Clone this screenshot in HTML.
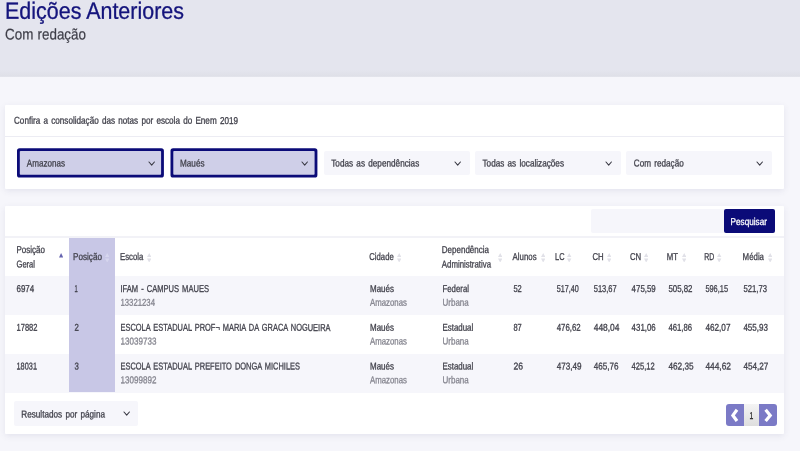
<!DOCTYPE html>
<html lang="pt-BR">
<head>
<meta charset="utf-8">
<title>Edições Anteriores</title>
<style>
*{box-sizing:border-box;margin:0;padding:0}
html,body{width:800px;height:451px;overflow:hidden}
body{background:#f6f6fb;font-family:"Liberation Sans",sans-serif;color:#41414b;position:relative;font-size:10px}
.abs{position:absolute}
.t{position:absolute;left:0;top:0;white-space:nowrap;display:block;transform-origin:0 0;-webkit-text-stroke:.3px;word-spacing:.12em}
.hdr{left:0;top:0;width:800px;height:77px;background:linear-gradient(#e4e5ee 0,#e4e5ee 70px,#dfe0e8 76px,#e6e7ee 77px)}
.card{background:#fff;box-shadow:0 2px 6px rgba(70,70,120,.10);border-radius:1px}
.sel{position:absolute;height:24px;top:151px;background:#f6f6fb;border-radius:2px}
.row{position:absolute;left:5px;width:779px;background:#f6f6fb}
</style>
</head>
<body>
<div class="abs hdr"></div>
<div class="abs card" style="left:5px;top:105px;width:779px;height:84px"></div>
<div class="abs" style="left:5px;top:136px;width:779px;height:1px;background:#ececf3"></div>
<svg class="abs" style="left:0;top:140px" width="340" height="45" viewBox="0 140 340 45">
<rect x="17" y="148.2" width="146.9" height="29.3" rx="2.6" fill="#0b0b78"/><rect x="19.8" y="151" width="141.3" height="23.7" rx=".8" fill="#cfcfe8"/>
<rect x="170.5" y="148.2" width="146.9" height="29.3" rx="2.6" fill="#0b0b78"/><rect x="173.3" y="151" width="141.3" height="23.7" rx=".8" fill="#cfcfe8"/>
</svg>
<div class="sel" style="left:323.5px;width:146px"></div>
<div class="sel" style="left:474.5px;width:146px"></div>
<div class="sel" style="left:626px;width:146px"></div>

<div class="abs card" style="left:5px;top:205.5px;width:779px;height:228.5px"></div>
<div class="abs" style="left:591px;top:209px;width:133px;height:24px;background:#f6f6fb;border-radius:2px 0 0 2px"></div>
<div class="abs" style="left:724px;top:209px;width:51px;height:24px;background:#0b0b78;border-radius:2px"></div>
<div class="abs" style="left:5px;top:236px;width:779px;height:2px;background:#f2f2f7"></div>
<div class="row" style="top:276px;height:39px"></div>
<div class="row" style="top:354px;height:39px"></div>
<div class="abs" style="left:68.6px;top:237.5px;width:46px;height:154.8px;background:#c8c7e6"></div>
<div class="abs" style="left:13.75px;top:401.25px;width:123.75px;height:24.5px;background:#f6f6fb;border-radius:2px"></div>

<div class="abs" style="left:726px;top:404px;width:18px;height:22px;background:#7b7ac6;border-radius:3px 0 0 3px"></div>
<div class="abs" style="left:744px;top:404px;width:15.2px;height:22px;background:linear-gradient(#f4f4f4,#dedede)"></div>
<div class="abs" style="left:759.2px;top:404px;width:18px;height:22px;background:#7b7ac6;border-radius:0 3px 3px 0"></div>
<svg class="abs" style="left:726px;top:404px" width="18" height="22" viewBox="0 0 18 22"><path d="M11 5.8 L6.9 11.4 L11 17" fill="none" stroke="#fff" stroke-width="3.2"/></svg>
<svg class="abs" style="left:759.2px;top:404px" width="18" height="22" viewBox="0 0 18 22"><path d="M6.6 5.8 L11.2 11.4 L6.6 17" fill="none" stroke="#fff" stroke-width="3.2"/></svg>

<svg class="abs" style="left:147.7px;top:160.8px" width="7.4" height="5.1" viewBox="-1 -1 7.4 5.1"><path d="M0 0 L2.7 3.1 L5.4 0" fill="none" stroke="#383842" stroke-width="1.05" stroke-linecap="round" stroke-linejoin="round"/></svg>
<svg class="abs" style="left:301.2px;top:160.8px" width="7.4" height="5.1" viewBox="-1 -1 7.4 5.1"><path d="M0 0 L2.7 3.1 L5.4 0" fill="none" stroke="#383842" stroke-width="1.05" stroke-linecap="round" stroke-linejoin="round"/></svg>
<svg class="abs" style="left:453.8px;top:160.8px" width="7.4" height="5.1" viewBox="-1 -1 7.4 5.1"><path d="M0 0 L2.7 3.1 L5.4 0" fill="none" stroke="#383842" stroke-width="1.05" stroke-linecap="round" stroke-linejoin="round"/></svg>
<svg class="abs" style="left:605.3px;top:160.8px" width="7.4" height="5.1" viewBox="-1 -1 7.4 5.1"><path d="M0 0 L2.7 3.1 L5.4 0" fill="none" stroke="#383842" stroke-width="1.05" stroke-linecap="round" stroke-linejoin="round"/></svg>
<svg class="abs" style="left:756px;top:160.8px" width="7.4" height="5.1" viewBox="-1 -1 7.4 5.1"><path d="M0 0 L2.7 3.1 L5.4 0" fill="none" stroke="#383842" stroke-width="1.05" stroke-linecap="round" stroke-linejoin="round"/></svg>
<svg class="abs" style="left:122.6px;top:410.9px" width="7.4" height="5.1" viewBox="-1 -1 7.4 5.1"><path d="M0 0 L2.7 3.1 L5.4 0" fill="none" stroke="#383842" stroke-width="1.05" stroke-linecap="round" stroke-linejoin="round"/></svg>
<svg class="abs" style="left:104.8px;top:252.6px" width="4.4" height="9.6" viewBox="0 0 4.4 9.6"><path d="M2.2 0 L4.4 4.1 L0 4.1 Z M0 5.5 L4.4 5.5 L2.2 9.6 Z" fill="#d6d6ee"/></svg>
<svg class="abs" style="left:146.8px;top:252.6px" width="4.4" height="9.6" viewBox="0 0 4.4 9.6"><path d="M2.2 0 L4.4 4.1 L0 4.1 Z M0 5.5 L4.4 5.5 L2.2 9.6 Z" fill="#e1e1e8"/></svg>
<svg class="abs" style="left:397px;top:252.6px" width="4.4" height="9.6" viewBox="0 0 4.4 9.6"><path d="M2.2 0 L4.4 4.1 L0 4.1 Z M0 5.5 L4.4 5.5 L2.2 9.6 Z" fill="#e1e1e8"/></svg>
<svg class="abs" style="left:497.8px;top:252.6px" width="4.4" height="9.6" viewBox="0 0 4.4 9.6"><path d="M2.2 0 L4.4 4.1 L0 4.1 Z M0 5.5 L4.4 5.5 L2.2 9.6 Z" fill="#e1e1e8"/></svg>
<svg class="abs" style="left:540.5px;top:252.6px" width="4.4" height="9.6" viewBox="0 0 4.4 9.6"><path d="M2.2 0 L4.4 4.1 L0 4.1 Z M0 5.5 L4.4 5.5 L2.2 9.6 Z" fill="#e1e1e8"/></svg>
<svg class="abs" style="left:567.3px;top:252.6px" width="4.4" height="9.6" viewBox="0 0 4.4 9.6"><path d="M2.2 0 L4.4 4.1 L0 4.1 Z M0 5.5 L4.4 5.5 L2.2 9.6 Z" fill="#e1e1e8"/></svg>
<svg class="abs" style="left:606.5px;top:252.6px" width="4.4" height="9.6" viewBox="0 0 4.4 9.6"><path d="M2.2 0 L4.4 4.1 L0 4.1 Z M0 5.5 L4.4 5.5 L2.2 9.6 Z" fill="#e1e1e8"/></svg>
<svg class="abs" style="left:644px;top:252.6px" width="4.4" height="9.6" viewBox="0 0 4.4 9.6"><path d="M2.2 0 L4.4 4.1 L0 4.1 Z M0 5.5 L4.4 5.5 L2.2 9.6 Z" fill="#e1e1e8"/></svg>
<svg class="abs" style="left:681.5px;top:252.6px" width="4.4" height="9.6" viewBox="0 0 4.4 9.6"><path d="M2.2 0 L4.4 4.1 L0 4.1 Z M0 5.5 L4.4 5.5 L2.2 9.6 Z" fill="#e1e1e8"/></svg>
<svg class="abs" style="left:717.3px;top:252.6px" width="4.4" height="9.6" viewBox="0 0 4.4 9.6"><path d="M2.2 0 L4.4 4.1 L0 4.1 Z M0 5.5 L4.4 5.5 L2.2 9.6 Z" fill="#e1e1e8"/></svg>
<svg class="abs" style="left:767.5px;top:252.6px" width="4.4" height="9.6" viewBox="0 0 4.4 9.6"><path d="M2.2 0 L4.4 4.1 L0 4.1 Z M0 5.5 L4.4 5.5 L2.2 9.6 Z" fill="#e1e1e8"/></svg>
<svg class="abs" style="left:58.8px;top:253.4px" width="4.2" height="4.4" viewBox="0 0 4.2 4.4"><path d="M2.1 0 L4.2 4.4 L0 4.4 Z" fill="#6664b0"/></svg>
<div class="abs" style="left:0;top:0;width:800px;height:451px;will-change:transform">
<span class="t" style="font-size:23.5px;line-height:29px;color:#14147c;transform:matrix(0.9135,.0005,0,1,5.00,-3.25);-webkit-text-stroke:.3px;word-spacing:0;">Edições Anteriores</span>
<span class="t" style="font-size:15.5px;line-height:19px;color:#3d3d47;transform:matrix(0.8662,.0005,0,1,5.00,24.50);-webkit-text-stroke:.2px;word-spacing:.03em;">Com redação</span>
<span class="t" style="font-size:10px;line-height:12px;color:#41414b;transform:matrix(0.8133,.0005,0,1,14.00,114.75);">Confira a consolidação das notas por escola do Enem 2019</span>
<span class="t" style="font-size:10px;line-height:12px;color:#41414b;transform:matrix(0.8095,.0005,0,1,26.75,157.50);">Amazonas</span>
<span class="t" style="font-size:10px;line-height:12px;color:#41414b;transform:matrix(0.8162,.0005,0,1,180.00,157.50);">Maués</span>
<span class="t" style="font-size:10px;line-height:12px;color:#41414b;transform:matrix(0.8187,.0005,0,1,331.25,157.50);">Todas as dependências</span>
<span class="t" style="font-size:10px;line-height:12px;color:#41414b;transform:matrix(0.8176,.0005,0,1,482.50,157.50);">Todas as localizações</span>
<span class="t" style="font-size:10px;line-height:12px;color:#41414b;transform:matrix(0.8165,.0005,0,1,633.75,157.50);">Com redação</span>
<span class="t" style="font-size:10px;line-height:12px;color:#ffffff;transform:matrix(0.8208,.0005,0,1,730.50,216.00);">Pesquisar</span>
<span class="t" style="font-size:10px;line-height:12px;color:#41414b;transform:matrix(0.8011,.0005,0,1,16.50,244.00);">Posição</span>
<span class="t" style="font-size:10px;line-height:12px;color:#41414b;transform:matrix(0.7565,.0005,0,1,16.50,258.50);">Geral</span>
<span class="t" style="font-size:10px;line-height:12px;color:#41414b;transform:matrix(0.8151,.0005,0,1,73.00,251.00);">Posição</span>
<span class="t" style="font-size:10px;line-height:12px;color:#41414b;transform:matrix(0.7763,.0005,0,1,120.00,251.00);">Escola</span>
<span class="t" style="font-size:10px;line-height:12px;color:#41414b;transform:matrix(0.7728,.0005,0,1,369.25,251.00);">Cidade</span>
<span class="t" style="font-size:10px;line-height:12px;color:#41414b;transform:matrix(0.8008,.0005,0,1,441.80,244.00);">Dependência</span>
<span class="t" style="font-size:10px;line-height:12px;color:#41414b;transform:matrix(0.7833,.0005,0,1,441.80,258.50);">Administrativa</span>
<span class="t" style="font-size:10px;line-height:12px;color:#41414b;transform:matrix(0.7849,.0005,0,1,512.60,251.00);">Alunos</span>
<span class="t" style="font-size:10px;line-height:12px;color:#41414b;transform:matrix(0.7424,.0005,0,1,555.00,251.00);">LC</span>
<span class="t" style="font-size:10px;line-height:12px;color:#41414b;transform:matrix(0.7784,.0005,0,1,592.50,251.00);">CH</span>
<span class="t" style="font-size:10px;line-height:12px;color:#41414b;transform:matrix(0.7784,.0005,0,1,630.00,251.00);">CN</span>
<span class="t" style="font-size:10px;line-height:12px;color:#41414b;transform:matrix(0.7784,.0005,0,1,666.75,251.00);">MT</span>
<span class="t" style="font-size:10px;line-height:12px;color:#41414b;transform:matrix(0.6919,.0005,0,1,704.25,251.00);">RD</span>
<span class="t" style="font-size:10px;line-height:12px;color:#41414b;transform:matrix(0.7853,.0005,0,1,742.60,251.00);">Média</span>
<span class="t" style="font-size:10px;line-height:12px;color:#41414b;transform:matrix(0.7978,.0005,0,1,16.50,283.00);">6974</span>
<span class="t" style="font-size:10px;line-height:12px;color:#41414b;transform:matrix(0.5753,.0005,0,1,74.40,283.00);">1</span>
<span class="t" style="font-size:10px;line-height:12px;color:#41414b;transform:matrix(0.7567,.0005,0,1,120.50,283.00);">IFAM - CAMPUS MAUES</span>
<span class="t" style="font-size:10px;line-height:12px;color:#85858f;transform:matrix(0.7753,.0005,0,1,120.50,296.75);">13321234</span>
<span class="t" style="font-size:10px;line-height:12px;color:#41414b;transform:matrix(0.7996,.0005,0,1,370.00,283.00);">Maués</span>
<span class="t" style="font-size:10px;line-height:12px;color:#85858f;transform:matrix(0.7831,.0005,0,1,370.00,296.75);">Amazonas</span>
<span class="t" style="font-size:10px;line-height:12px;color:#41414b;transform:matrix(0.7816,.0005,0,1,442.50,283.00);">Federal</span>
<span class="t" style="font-size:10px;line-height:12px;color:#85858f;transform:matrix(0.8000,.0005,0,1,442.50,296.75);">Urbana</span>
<span class="t" style="font-size:10px;line-height:12px;color:#41414b;transform:matrix(0.7506,.0005,0,1,513.40,283.00);">52</span>
<span class="t" style="font-size:10px;line-height:12px;color:#41414b;transform:matrix(0.7207,.0005,0,1,556.70,283.00);">517,40</span>
<span class="t" style="font-size:10px;line-height:12px;color:#41414b;transform:matrix(0.7534,.0005,0,1,593.70,283.00);">513,67</span>
<span class="t" style="font-size:10px;line-height:12px;color:#41414b;transform:matrix(0.7894,.0005,0,1,631.60,283.00);">475,59</span>
<span class="t" style="font-size:10px;line-height:12px;color:#41414b;transform:matrix(0.7877,.0005,0,1,668.40,283.00);">505,82</span>
<span class="t" style="font-size:10px;line-height:12px;color:#41414b;transform:matrix(0.7387,.0005,0,1,705.40,283.00);">596,15</span>
<span class="t" style="font-size:10px;line-height:12px;color:#41414b;transform:matrix(0.7714,.0005,0,1,743.40,283.00);">521,73</span>
<span class="t" style="font-size:10px;line-height:12px;color:#41414b;transform:matrix(0.7551,.0005,0,1,16.50,321.75);">17882</span>
<span class="t" style="font-size:10px;line-height:12px;color:#41414b;transform:matrix(0.7820,.0005,0,1,74.40,321.75);">2</span>
<span class="t" style="font-size:10px;line-height:12px;color:#41414b;transform:matrix(0.7447,.0005,0,1,120.50,321.75);">ESCOLA ESTADUAL PROF¬ MARIA DA GRACA NOGUEIRA</span>
<span class="t" style="font-size:10px;line-height:12px;color:#85858f;transform:matrix(0.8090,.0005,0,1,120.50,335.50);">13039733</span>
<span class="t" style="font-size:10px;line-height:12px;color:#41414b;transform:matrix(0.7996,.0005,0,1,370.00,321.75);">Maués</span>
<span class="t" style="font-size:10px;line-height:12px;color:#85858f;transform:matrix(0.7831,.0005,0,1,370.00,335.50);">Amazonas</span>
<span class="t" style="font-size:10px;line-height:12px;color:#41414b;transform:matrix(0.7900,.0005,0,1,442.50,321.75);">Estadual</span>
<span class="t" style="font-size:10px;line-height:12px;color:#85858f;transform:matrix(0.8000,.0005,0,1,442.50,335.50);">Urbana</span>
<span class="t" style="font-size:10px;line-height:12px;color:#41414b;transform:matrix(0.7506,.0005,0,1,513.40,321.75);">87</span>
<span class="t" style="font-size:10px;line-height:12px;color:#41414b;transform:matrix(0.7861,.0005,0,1,556.70,321.75);">476,62</span>
<span class="t" style="font-size:10px;line-height:12px;color:#41414b;transform:matrix(0.8433,.0005,0,1,593.70,321.75);">448,04</span>
<span class="t" style="font-size:10px;line-height:12px;color:#41414b;transform:matrix(0.7894,.0005,0,1,631.60,321.75);">431,06</span>
<span class="t" style="font-size:10px;line-height:12px;color:#41414b;transform:matrix(0.7714,.0005,0,1,668.40,321.75);">461,86</span>
<span class="t" style="font-size:10px;line-height:12px;color:#41414b;transform:matrix(0.8204,.0005,0,1,705.40,321.75);">462,07</span>
<span class="t" style="font-size:10px;line-height:12px;color:#41414b;transform:matrix(0.8041,.0005,0,1,743.40,321.75);">455,93</span>
<span class="t" style="font-size:10px;line-height:12px;color:#41414b;transform:matrix(0.7371,.0005,0,1,16.50,360.50);">18031</span>
<span class="t" style="font-size:10px;line-height:12px;color:#41414b;transform:matrix(0.7820,.0005,0,1,74.40,360.50);">3</span>
<span class="t" style="font-size:10px;line-height:12px;color:#41414b;transform:matrix(0.7454,.0005,0,1,120.50,360.50);">ESCOLA ESTADUAL PREFEITO DONGA MICHILES</span>
<span class="t" style="font-size:10px;line-height:12px;color:#85858f;transform:matrix(0.8090,.0005,0,1,120.50,374.25);">13099892</span>
<span class="t" style="font-size:10px;line-height:12px;color:#41414b;transform:matrix(0.7996,.0005,0,1,370.00,360.50);">Maués</span>
<span class="t" style="font-size:10px;line-height:12px;color:#85858f;transform:matrix(0.7831,.0005,0,1,370.00,374.25);">Amazonas</span>
<span class="t" style="font-size:10px;line-height:12px;color:#41414b;transform:matrix(0.7900,.0005,0,1,442.50,360.50);">Estadual</span>
<span class="t" style="font-size:10px;line-height:12px;color:#85858f;transform:matrix(0.8000,.0005,0,1,442.50,374.25);">Urbana</span>
<span class="t" style="font-size:10px;line-height:12px;color:#41414b;transform:matrix(0.8629,.0005,0,1,513.40,360.50);">26</span>
<span class="t" style="font-size:10px;line-height:12px;color:#41414b;transform:matrix(0.8139,.0005,0,1,556.70,360.50);">473,49</span>
<span class="t" style="font-size:10px;line-height:12px;color:#41414b;transform:matrix(0.8139,.0005,0,1,593.70,360.50);">465,76</span>
<span class="t" style="font-size:10px;line-height:12px;color:#41414b;transform:matrix(0.7518,.0005,0,1,631.60,360.50);">425,12</span>
<span class="t" style="font-size:10px;line-height:12px;color:#41414b;transform:matrix(0.8237,.0005,0,1,668.40,360.50);">462,35</span>
<span class="t" style="font-size:10px;line-height:12px;color:#41414b;transform:matrix(0.8368,.0005,0,1,705.40,360.50);">444,62</span>
<span class="t" style="font-size:10px;line-height:12px;color:#41414b;transform:matrix(0.8172,.0005,0,1,743.40,360.50);">454,27</span>
<span class="t" style="font-size:10px;line-height:12px;color:#41414b;transform:matrix(0.8173,.0005,0,1,21.25,408.50);">Resultados por página</span>
<span class="t" style="font-size:10px;line-height:12px;color:#2b2b2b;transform:matrix(0.6831,.0005,0,1,749.60,410.00);">1</span>
</div>
</body>
</html>
